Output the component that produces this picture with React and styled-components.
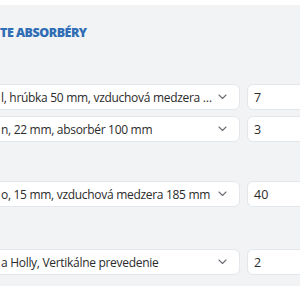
import React from "react";
import styled, { createGlobalStyle } from "styled-components";

const GlobalStyle = createGlobalStyle`
    body {
        margin: 0;
        background: #ffffff;
        overflow: hidden;
        font-family: "Open Sans", "Noto Sans", sans-serif;
    }
`;

const Page = styled.div`
    padding-top: 5px;
    width: 300px;
    overflow: hidden;
`;

const Panel = styled.div`
    background: #f1f3f5;
    margin-left: -20px;
    width: 360px;
    padding: 20px 0 11px 0;
`;

const Title = styled.h3`
    margin: 0 0 43px 20px;
    font-size: 12.5px;
    line-height: 16px;
    font-weight: 800;
    color: #2f6db4;
    letter-spacing: -0.5px;
`;

const Group = styled.div`
    display: flex;
    flex-direction: column;
    gap: 6px;
    margin-top: ${(p) => p.$top || 0}px;
`;

const Row = styled.div`
    display: grid;
    grid-template-columns: 260px 80px;
    gap: 7px;
`;

const Select = styled.div`
    height: 26px;
    background: #ffffff;
    border: 1px solid #e3e6ea;
    border-radius: 6px;
    box-sizing: border-box;
    display: flex;
    align-items: center;
    padding: 0 12px 0 20px;
    gap: 4px;
    min-width: 0;
`;

const Label = styled.span`
    flex: 1;
    min-width: 0;
    font-size: 12px;
    letter-spacing: -0.3px;
    color: #2b2b2b;
    white-space: nowrap;
    overflow: hidden;
    text-overflow: ellipsis;
`;

const NumberBox = styled.div`
    height: 26px;
    background: #ffffff;
    border: 1px solid #e3e6ea;
    border-radius: 6px;
    box-sizing: border-box;
    display: flex;
    align-items: center;
    padding-left: 6px;
    font-size: 12.5px;
    color: #2b2b2b;
`;

const Chevron = () => (
    <svg width="9" height="6" viewBox="0 0 9 6" fill="none">
        <path d="M1 1l3.5 3.5L8 1" stroke="#6b6f75" strokeWidth="1.1" strokeLinecap="round" strokeLinejoin="round" />
    </svg>
);

const groups = [
    {
        top: 0,
        rows: [
            { label: "l, hrúbka 50 mm, vzduchová medzera 100 mm", qty: "7" },
            { label: "n, 22 mm, absorbér 100 mm", qty: "3" },
        ],
    },
    {
        top: 39,
        rows: [{ label: "o, 15 mm, vzduchová medzera 185 mm", qty: "40" }],
    },
    {
        top: 42,
        rows: [{ label: "a Holly, Vertikálne prevedenie", qty: "2" }],
    },
];

const App = () => {
    return (
        <Page>
            <GlobalStyle />
            <Panel>
                <Title>TE ABSORBÉRY</Title>
                {groups.map((group, i) => (
                    <Group key={i} $top={group.top}>
                        {group.rows.map((row) => (
                            <Row key={row.label}>
                                <Select>
                                    <Label>{row.label}</Label>
                                    <Chevron />
                                </Select>
                                <NumberBox>{row.qty}</NumberBox>
                            </Row>
                        ))}
                    </Group>
                ))}
            </Panel>
        </Page>
    );
};

export default App;
